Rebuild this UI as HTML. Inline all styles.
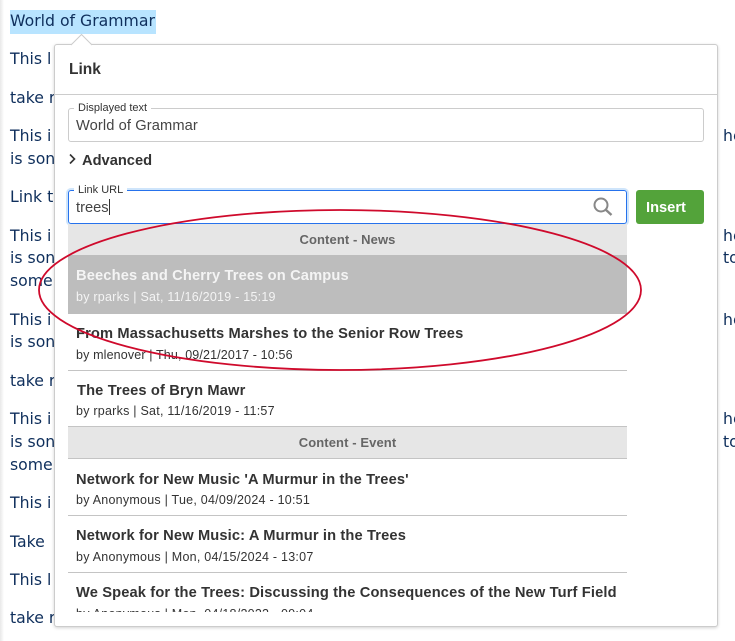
<!DOCTYPE html>
<html><head><meta charset="utf-8">
<style>
html,body{margin:0;padding:0;background:#fff;}
body{width:735px;height:641px;position:relative;overflow:hidden;font-family:"Liberation Sans",sans-serif;}
.a{position:absolute;white-space:nowrap;}
.b{position:absolute;white-space:nowrap;font-family:"DejaVu Sans",sans-serif;font-size:15.7px;line-height:20px;color:#0f2f5c;}
.t{position:absolute;white-space:nowrap;left:76px;font-weight:bold;font-size:14.67px;line-height:18px;color:#333;letter-spacing:.14px;}
.m{position:absolute;white-space:nowrap;left:76px;font-size:12.5px;line-height:16px;color:#333;letter-spacing:.24px;}
.h{position:absolute;left:68px;width:559px;background:#e6e6e6;text-align:center;font-weight:bold;font-size:13px;line-height:16px;color:#666;letter-spacing:.1px;}
.d{position:absolute;left:68px;width:559px;height:1px;background:#c4c4c4;}
</style></head><body>
<div class="a" style="left:0;top:0;width:4px;height:641px;background:linear-gradient(90deg,#e8e8e8,#fff)"></div>
<div class="a" style="left:10px;top:10px;width:146px;height:24px;background:#b8e4ff"></div>
<div class="b" style="left:10px;top:11px">World of Grammar</div>
<div class="b" style="left:10px;top:49px">This l</div>
<div class="b" style="left:10px;top:88px">take r</div>
<div class="b" style="left:10px;top:126px">This i</div>
<div class="b" style="left:10px;top:149px">is son</div>
<div class="b" style="left:10px;top:187px">Link t</div>
<div class="b" style="left:10px;top:226px">This i</div>
<div class="b" style="left:10px;top:248px">is son</div>
<div class="b" style="left:10px;top:271px">some</div>
<div class="b" style="left:10px;top:310px">This i</div>
<div class="b" style="left:10px;top:332px">is son</div>
<div class="b" style="left:10px;top:371px">take r</div>
<div class="b" style="left:10px;top:409px">This i</div>
<div class="b" style="left:10px;top:432px">is son</div>
<div class="b" style="left:10px;top:455px">some</div>
<div class="b" style="left:10px;top:493px">This i</div>
<div class="b" style="left:10px;top:532px">Take</div>
<div class="b" style="left:10px;top:570px">This l</div>
<div class="b" style="left:10px;top:608px">take r</div>
<div class="b" style="left:723px;top:126px">he</div>
<div class="b" style="left:723px;top:226px">he</div>
<div class="b" style="left:723px;top:248px">to</div>
<div class="b" style="left:723px;top:310px">he</div>
<div class="b" style="left:723px;top:409px">he</div>
<div class="b" style="left:723px;top:432px">to</div>

<div class="a" style="left:54px;top:44px;width:662px;height:581px;background:#fff;border:1px solid #ccc;border-radius:3px;box-shadow:0 1px 3px rgba(0,0,0,.18)"></div>
<svg class="a" style="left:70px;top:33px" width="24" height="13" viewBox="0 0 24 13"><path d="M1 12 L11.5 1.5 L22 12" fill="#fff" stroke="#ccc" stroke-width="1"/><rect x="2" y="12" width="19" height="1" fill="#fff"/></svg>
<div class="a" style="left:69px;top:61px;font-weight:bold;font-size:15.5px;line-height:18px;color:#333">Link</div>
<div class="a" style="left:55px;top:94px;width:662px;height:1px;background:#ccc"></div>

<div class="a" style="left:68px;top:108px;width:634px;height:32px;border:1px solid #ccc;border-radius:3px"></div>
<div class="a" style="left:74px;top:101px;padding:0 4px;background:#fff;font-size:11px;line-height:14px;color:#333">Displayed text</div>
<div class="a" style="left:76px;top:117px;font-size:14.67px;line-height:18px;color:#444;letter-spacing:.1px">World of Grammar</div>

<svg class="a" style="left:68px;top:153px" width="10" height="12" viewBox="0 0 10 12"><path d="M2 1.5 L6.5 6 L2 10.5" fill="none" stroke="#333" stroke-width="1.6"/></svg>
<div class="a" style="left:82px;top:152px;font-weight:bold;font-size:14.67px;line-height:18px;color:#333">Advanced</div>

<div class="a" style="left:68px;top:190px;width:557px;height:32px;border:1px solid #2672ec;border-radius:3px;box-shadow:0 0 0 2px #cfe5fb"></div>
<div class="a" style="left:74px;top:183px;padding:0 4px;background:#fff;font-size:11px;line-height:14px;color:#333">Link URL</div>
<div class="a" style="left:76px;top:199px;font-size:14.67px;line-height:18px;color:#444">trees</div>
<div class="a" style="left:109px;top:199px;width:1px;height:16px;background:#333"></div>
<svg class="a" style="left:592px;top:196px" width="22" height="21" viewBox="0 0 22 21"><circle cx="9" cy="9" r="6.5" fill="none" stroke="#888" stroke-width="2"/><path d="M13.8 13.8 L19.5 19" fill="none" stroke="#888" stroke-width="2.4"/></svg>
<div class="a" style="left:636px;top:190px;width:68px;height:34px;background:#53a33a;border-radius:3px"></div>
<div class="a" style="left:646px;top:199px;font-weight:bold;font-size:14.67px;line-height:18px;color:#fff">Insert</div>

<div class="h" style="top:224px;height:31px;line-height:31px">Content - News</div>
<div class="a" style="left:68px;top:255px;width:559px;height:59px;background:#bdbdbd"></div>
<div class="t" style="top:267px;color:#f4f4f4">Beeches and Cherry Trees on Campus</div>
<div class="m" style="top:289px;color:#f4f4f4">by rparks | Sat, 11/16/2019 - 15:19</div>
<div class="t" style="top:325px">From Massachusetts Marshes to the Senior Row Trees</div>
<div class="m" style="top:347px;letter-spacing:.14px">by mlenover | Thu, 09/21/2017 - 10:56</div>
<div class="d" style="top:370px"></div>
<div class="t" style="top:382px;left:77px">The Trees of Bryn Mawr</div>
<div class="m" style="top:403px">by rparks | Sat, 11/16/2019 - 11:57</div>
<div class="h" style="top:426px;height:31px;line-height:31px;border-top:1px solid #c4c4c4;border-bottom:1px solid #c4c4c4">Content - Event</div>
<div class="t" style="top:471px">Network for New Music 'A Murmur in the Trees'</div>
<div class="m" style="top:492px">by Anonymous | Tue, 04/09/2024 - 10:51</div>
<div class="d" style="top:515px"></div>
<div class="t" style="top:527px">Network for New Music: A Murmur in the Trees</div>
<div class="m" style="top:549px">by Anonymous | Mon, 04/15/2024 - 13:07</div>
<div class="d" style="top:572px"></div>
<div class="t" style="top:584px">We Speak for the Trees: Discussing the Consequences of the New Turf Field</div>
<div class="a" style="left:68px;top:606px;width:559px;height:6px;overflow:hidden"><div class="m" style="left:8px;top:0">by Anonymous | Mon, 04/18/2022 - 09:04</div></div>

<svg class="a" style="left:0;top:0" width="735" height="641" viewBox="0 0 735 641"><ellipse cx="340" cy="290" rx="301" ry="80" fill="none" stroke="#cf0a2c" stroke-width="1.8"/></svg>
</body></html>
